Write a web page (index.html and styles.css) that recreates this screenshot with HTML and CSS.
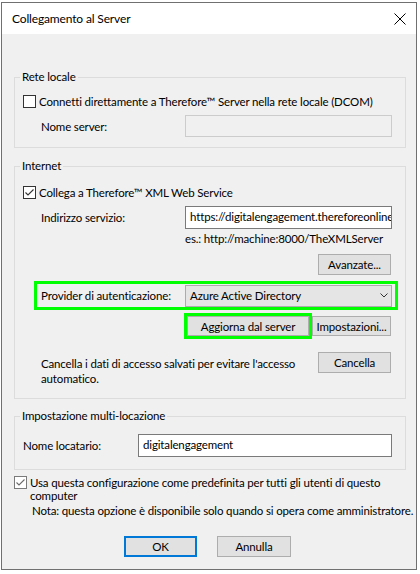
FILE: index.html
```html
<!DOCTYPE html>
<html lang="it">
<head>
<meta charset="utf-8">
<title>Collegamento al Server</title>
<link rel="stylesheet" href="styles.css">
</head>
<body>
<div class="window">
  <div class="titlebar">
    <span class="title">Collegamento al Server</span>
    <svg class="close" width="12" height="12" viewBox="0 0 12 12"><path d="M0.5 0.5 L11.5 11.5 M11.5 0.5 L0.5 11.5" stroke="#000" stroke-width="1" fill="none"/></svg>
  </div>
  <div class="content">
    <fieldset class="group g1">
      <legend>Rete locale</legend>
      <div class="check-row">
        <span class="cb"></span>
        <span>Connetti direttamente a Therefore™ Server nella rete locale (DCOM)</span>
      </div>
      <div class="field-row">
        <span class="field-label">Nome server:</span>
        <div class="textbox disabled"></div>
      </div>
    </fieldset>

    <fieldset class="group g2">
      <legend>Internet</legend>
      <div class="check-row">
        <span class="cb checked"><svg width="11" height="11" viewBox="0 0 11 11"><polyline points="1.5,5.5 4,8 9.5,2.5" stroke="#333" stroke-width="1.1" fill="none"/></svg></span>
        <span>Collega a Therefore™ XML Web Service</span>
      </div>
      <div class="field-row addr-row">
        <span class="field-label">Indirizzo servizio:</span>
        <div class="textbox tall">https://digitalengagement.thereforeonline</div>
      </div>
      <div class="hint">es.: http://machine:8000/TheXMLServer</div>
      <div class="btn-row adv-row">
        <div class="btn btn-adv">Avanzate...</div>
      </div>
      <div class="provider">
        <span class="field-label">Provider di autenticazione:</span>
        <div class="select">
          <span>Azure Active Directory</span>
          <svg width="8" height="5" viewBox="0 0 8 5"><polyline points="0.5,0.5 4,4 7.5,0.5" stroke="#333" stroke-width="1" fill="none"/></svg>
        </div>
      </div>
      <div class="btn-row upd-row">
        <div class="btn btn-upd">Aggiorna dal server</div>
        <div class="btn btn-set">Impostazioni...</div>
      </div>
      <div class="clear-row">
        <div class="clear-text">Cancella i dati di accesso salvati per evitare l'accesso automatico.</div>
        <div class="btn btn-clear">Cancella</div>
      </div>
    </fieldset>

    <fieldset class="group g3">
      <legend>Impostazione multi-locazione</legend>
      <div class="field-row tenant-row">
        <span class="field-label tenant-label">Nome locatario:</span>
        <div class="textbox tall tenant-box">digitalengagement</div>
      </div>
    </fieldset>

    <div class="default-row">
      <span class="cb checked soft"><svg width="11" height="11" viewBox="0 0 11 11"><polyline points="1.5,5.5 4,8 9.5,2.5" stroke="#6a6a6a" stroke-width="1.1" fill="none"/></svg></span>
      <span class="default-text">Usa questa configurazione come predefinita per tutti gli utenti di questo computer</span>
    </div>
    <div class="note">Nota: questa opzione è disponibile solo quando si opera come amministratore.</div>

    <div class="dialog-buttons">
      <div class="btn btn-ok">OK</div>
      <div class="btn btn-cancel">Annulla</div>
    </div>
  </div>
</div>
</body>
</html>
```

FILE: styles.css
```css
* { box-sizing: border-box; }
html, body { margin: 0; background: #fff; }
body {
  font-family: "Lato", "Noto Sans", sans-serif;
  font-size: 11.5px;
  letter-spacing: -0.15px;
  color: #000;
}
.window {
  margin: 2px 0 0 1px;
  width: 416px;
  height: 568px;
  border: 1px solid #707070;
  background: #f0f0f0;
  display: flex;
  flex-direction: column;
  overflow: hidden;
}
.titlebar {
  flex: none;
  height: 31px;
  background: #fff;
  display: flex;
  align-items: center;
  justify-content: space-between;
  padding: 0 10px 0 10px;
}
.title { line-height: 16px; font-size: 12px; letter-spacing: -0.15px; }
.close { display: block; }
.content {
  flex: 1;
  display: flex;
  flex-direction: column;
  padding: 35px 10px 0 12px;
}
.group {
  margin: 0;
  min-width: 0;
  border: 1px solid #dcdcdc;
  padding: 0 13px 0 8px;
}
.group legend {
  padding: 0 2px;
  margin-left: -3px;
  line-height: 16px;
}
.check-row {
  display: flex;
  align-items: center;
  height: 16px;
  gap: 3px;
  white-space: nowrap;
}
.cb {
  flex: none;
  width: 13px;
  height: 13px;
  border: 1px solid #333;
  background: #fff;
  display: flex;
}
.cb svg { display: block; }
.cb.soft { border-color: #7a7a7a; }
.field-row {
  display: flex;
  align-items: center;
  padding-left: 18px;
}
.field-label { flex: none; width: 144px; white-space: nowrap; }
.textbox {
  width: 207px;
  height: 22px;
  border: 1px solid #7a7a7a;
  background: #fff;
  padding: 0 4px;
  line-height: 20px;
  overflow: hidden;
  white-space: nowrap;
}
.textbox.tall { height: 23px; line-height: 20px; }
.textbox.disabled { border-color: #cccccc; background: #f0f0f0; }

.g1 .check-row { margin-top: 8px; }
.g1 .field-row { margin-top: 6px; }
.g1 { padding-bottom: 10px; }

.g2 { margin-top: 10px; padding-bottom: 12px; }
.g2 .check-row { margin-top: 10px; }
.addr-row { margin-top: 6px; }
.hint { margin: 2px 0 0 162px; line-height: 16px; white-space: nowrap; }

.btn-row {
  display: flex;
  justify-content: flex-end;
  padding-right: 1px;
}
.btn {
  display: flex;
  align-items: center;
  justify-content: center;
  height: 21px;
  border: 1px solid #adadad;
  background: #e1e1e1;
  white-space: nowrap;
}
.adv-row { margin-top: 7px; }
.btn-adv { width: 73px; }

.provider {
  margin: 9px -3px 0 14px;
  height: 23px;
  outline: 3px solid #00ff00;
  display: flex;
  align-items: center;
  padding: 0 3px 0 4px;
}
.select {
  width: 207px;
  height: 22px;
  border: 1px solid #acacac;
  background: #e5e5e5;
  display: flex;
  align-items: center;
  justify-content: space-between;
  padding: 0 3px 0 4px;
}
.select svg { display: block; }

.upd-row { margin-top: 9px; gap: 3px; }
.upd-row .btn { height: 20px; }
.btn-upd { width: 122px; outline: 3px solid #00ff00; }
.btn-set { width: 79px; }

.clear-row {
  margin-top: 16px;
  display: flex;
  justify-content: space-between;
  align-items: flex-start;
  padding-left: 18px;
  padding-right: 1px;
}
.clear-text { width: 265px; margin-top: 4px; line-height: 15px; }
.btn-clear { width: 73px; }

.g3 { margin-top: 9px; padding-bottom: 12px; }
.tenant-row { margin-top: 10px; padding-left: 0; }
.tenant-label { width: 115px; }
.tenant-box { width: 254px; }

.default-row {
  margin-top: 6px;
  display: flex;
  align-items: flex-start;
  gap: 3px;
}
.default-text { line-height: 13px; }
.note { margin: 1px 0 0 18px; line-height: 16px; white-space: nowrap; }

.dialog-buttons {
  margin: 17px 0 0 110px;
  display: flex;
  gap: 20px;
}
.btn-ok { width: 73px; border: 2px solid #0078d7; }
.btn-cancel { width: 74px; }
```
